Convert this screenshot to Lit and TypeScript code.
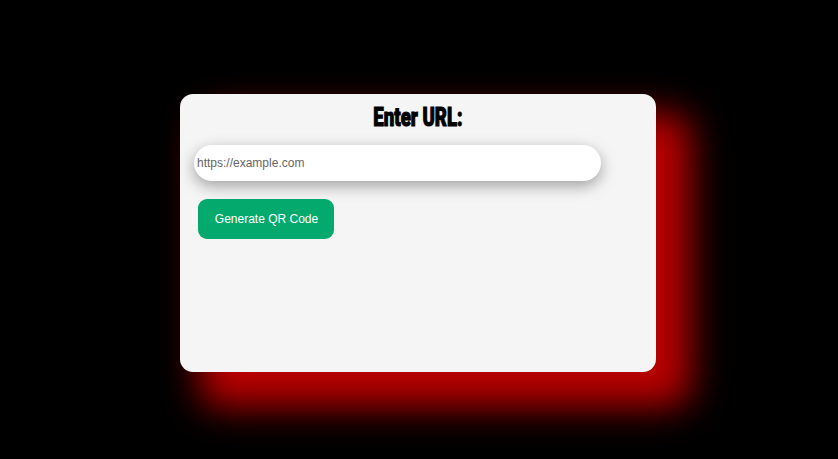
import { LitElement, html, css } from "lit";
import { customElement } from "lit/decorators.js";

@customElement("app-root")
export class AppRoot extends LitElement {
  static styles = css`
    :host {
      display: block;
      height: 100vh;
      box-sizing: border-box;
      padding: 94px 182px 87px 180px;
      background: #000;
      overflow: hidden;
      font-family: "Liberation Sans", Arial, sans-serif;
    }
    .card {
      display: flex;
      flex-direction: column;
      align-items: flex-start;
      box-sizing: border-box;
      height: 278px;
      padding: 8px 14px;
      border-radius: 13px;
      background: #f5f5f5;
      box-shadow: 27px 27px 36px 8px #b80000;
    }
    .title {
      align-self: center;
      margin: 0;
      height: 31px;
      line-height: 31px;
      font-family: Impact, Roboto, sans-serif;
      font-size: 25px;
      font-weight: 900;
      white-space: nowrap;
      color: #000;
      transform: scaleX(0.745);
      -webkit-text-stroke: 1.1px #000;
    }
    .url {
      box-sizing: border-box;
      width: 407px;
      height: 36px;
      margin: 12px 0 18px;
      padding: 0 3px;
      border: 0;
      border-radius: 18px;
      background: #fff;
      font: 12px "Liberation Sans", Arial, sans-serif;
      box-shadow: rgba(0, 0, 0, 0.35) 0 5px 15px;
    }
    .url::placeholder {
      color: #666;
    }
    .generate {
      width: 136px;
      height: 40px;
      margin-left: 4px;
      padding: 0 0 0 1px;
      border: 0;
      border-radius: 9px;
      background: #04aa6d;
      color: #fff;
      font: 12px "Liberation Sans", Arial, sans-serif;
    }
  `;

  render() {
    return html`
      <main class="card">
        <h1 class="title">Enter URL:</h1>
        <input class="url" type="text" placeholder="https://example.com" />
        <button class="generate">Generate QR Code</button>
      </main>
    `;
  }
}
